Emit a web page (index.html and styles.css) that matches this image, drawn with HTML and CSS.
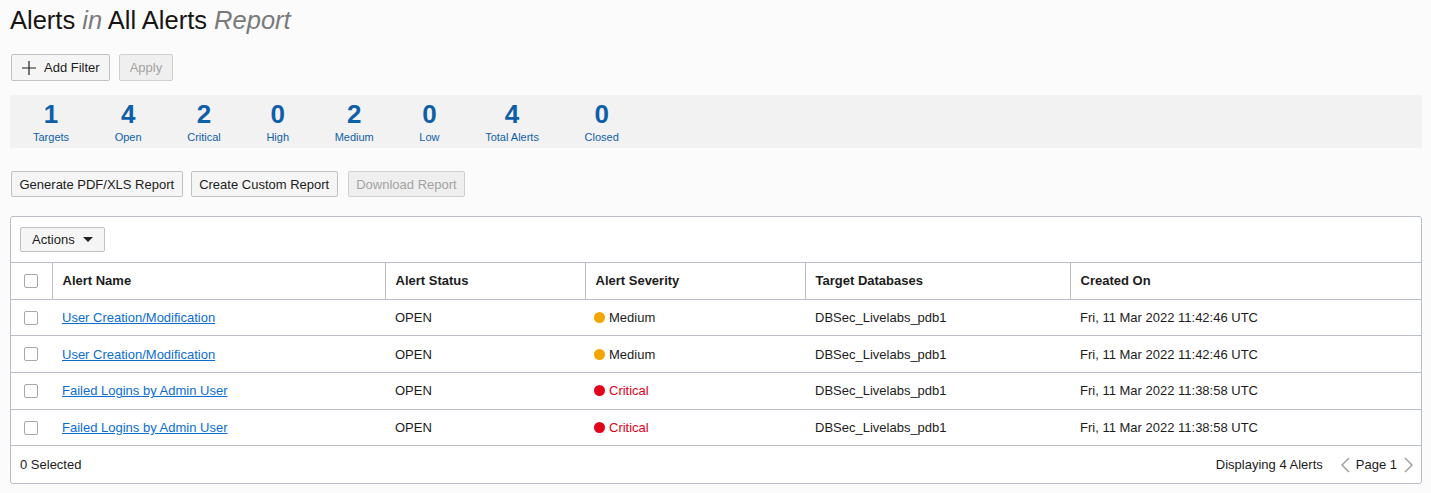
FILE: index.html
```html
<!DOCTYPE html>
<html lang="en">
<head>
<meta charset="utf-8">
<title>Alerts in All Alerts Report</title>
<link rel="stylesheet" href="styles.css">
</head>
<body>
<h1 class="title">Alerts <span class="muted">in</span> All Alerts <span class="muted">Report</span></h1>

<div class="filter-bar">
  <button class="btn btn-add"><svg class="plus" width="14" height="14" viewBox="0 0 14 14"><path d="M7 0v14M0 7h14" stroke="#222" stroke-width="1.2" fill="none"/></svg>Add Filter</button>
  <button class="btn btn-apply btn-disabled">Apply</button>
</div>

<div class="stats">
  <div class="stat"><div class="num">1</div><div class="lbl">Targets</div></div>
  <div class="stat"><div class="num">4</div><div class="lbl">Open</div></div>
  <div class="stat"><div class="num">2</div><div class="lbl">Critical</div></div>
  <div class="stat"><div class="num">0</div><div class="lbl">High</div></div>
  <div class="stat"><div class="num">2</div><div class="lbl">Medium</div></div>
  <div class="stat"><div class="num">0</div><div class="lbl">Low</div></div>
  <div class="stat"><div class="num">4</div><div class="lbl">Total Alerts</div></div>
  <div class="stat"><div class="num">0</div><div class="lbl">Closed</div></div>
</div>

<div class="report-bar">
  <button class="btn btn-report">Generate PDF/XLS Report</button>
  <button class="btn btn-report">Create Custom Report</button>
  <button class="btn btn-report btn-disabled">Download Report</button>
</div>

<div class="panel">
  <div class="toolbar">
    <button class="btn btn-actions">Actions <span class="caret"></span></button>
  </div>
  <table class="grid">
    <colgroup>
      <col class="c-check"><col class="c-name"><col class="c-status"><col class="c-sev"><col class="c-target"><col>
    </colgroup>
    <thead>
      <tr>
        <th class="chk"><span class="box"></span></th>
        <th>Alert Name</th>
        <th>Alert Status</th>
        <th>Alert Severity</th>
        <th>Target Databases</th>
        <th>Created On</th>
      </tr>
    </thead>
    <tbody>
      <tr>
        <td class="chk"><span class="box"></span></td>
        <td><a href="#">User Creation/Modification</a></td>
        <td>OPEN</td>
        <td><span class="dot medium"></span>Medium</td>
        <td>DBSec_Livelabs_pdb1</td>
        <td>Fri, 11 Mar 2022 11:42:46 UTC</td>
      </tr>
      <tr>
        <td class="chk"><span class="box"></span></td>
        <td><a href="#">User Creation/Modification</a></td>
        <td>OPEN</td>
        <td><span class="dot medium"></span>Medium</td>
        <td>DBSec_Livelabs_pdb1</td>
        <td>Fri, 11 Mar 2022 11:42:46 UTC</td>
      </tr>
      <tr>
        <td class="chk"><span class="box"></span></td>
        <td><a href="#">Failed Logins by Admin User</a></td>
        <td>OPEN</td>
        <td class="crit"><span class="dot critical"></span>Critical</td>
        <td>DBSec_Livelabs_pdb1</td>
        <td>Fri, 11 Mar 2022 11:38:58 UTC</td>
      </tr>
      <tr>
        <td class="chk"><span class="box"></span></td>
        <td><a href="#">Failed Logins by Admin User</a></td>
        <td>OPEN</td>
        <td class="crit"><span class="dot critical"></span>Critical</td>
        <td>DBSec_Livelabs_pdb1</td>
        <td>Fri, 11 Mar 2022 11:38:58 UTC</td>
      </tr>
    </tbody>
  </table>
  <div class="footer">
    <span>0 Selected</span>
    <div class="pager">
      <span>Displaying 4 Alerts</span>
      <svg class="chev" width="10" height="16" viewBox="0 0 10 16"><path d="M9 1L2 8l7 7" stroke="#9a9a9a" stroke-width="1.4" fill="none"/></svg>
      <span>Page 1</span>
      <svg class="chev" width="10" height="16" viewBox="0 0 10 16"><path d="M1 1l7 7-7 7" stroke="#9a9a9a" stroke-width="1.4" fill="none"/></svg>
    </div>
  </div>
</div>
</body>
</html>
```
FILE: styles.css
```css
* { box-sizing: border-box; }
body {
  margin: 0;
  padding: 0 9px 0 10px;
  background: #fbfbfb;
  font-family: "Liberation Sans", Arial, sans-serif;
  font-size: 13px;
  color: #1c1c1c;
}
.title {
  margin: 5px 0 0;
  font-size: 25.5px;
  font-weight: normal;
  line-height: 30px;
  color: #161513;
}
.title .muted { font-style: italic; color: #7a7a7a; }

.btn {
  font-family: inherit;
  font-size: 13px;
  color: #1c1c1c;
  background: #f5f5f5;
  border: 1px solid #c1c1c1;
  border-radius: 2px;
  padding: 0 9px;
  display: inline-flex;
  align-items: center;
  margin: 0;
}
.btn-disabled { color: #a3a3a3; background: #efefef; border-color: #cfcfcf; }

.filter-bar {
  margin-top: 19px;
  display: flex;
  gap: 9px;
  padding-left: 1px;
}
.filter-bar .btn { height: 27px; }
.btn-add { padding: 0 9px 0 10px; }
.btn-add .plus { margin-right: 8px; }
.btn-apply { padding: 0 10px; }

.stats {
  margin-top: 14px;
  height: 53px;
  background: #f2f2f2;
  display: flex;
  padding-left: 23px;
}
.stat {
  display: flex;
  flex-direction: column;
  align-items: center;
  margin-right: 45.6px;
  color: #0f5fa8;
}
.stat .num {
  font-size: 26px;
  font-weight: bold;
  line-height: 30px;
  margin-top: 4px;
}
.stat .lbl {
  font-size: 11px;
  line-height: 14px;
  margin-top: 1px;
}

.report-bar {
  margin-top: 23px;
  display: flex;
  gap: 8px;
  padding-left: 1px;
}
.report-bar .btn { height: 26px; }
.btn-report { padding: 0 7.5px; }
.report-bar .btn-disabled { margin-left: 2px; }

.panel {
  margin-top: 19px;
  background: #fff;
  border: 1px solid #b9bec6;
  border-radius: 3px;
}
.toolbar { padding: 10px 9px 10px; }
.btn-actions { height: 25px; padding: 0 11px; }
.caret {
  display: inline-block;
  margin-left: 8px;
  width: 0; height: 0;
  border-left: 5px solid transparent;
  border-right: 5px solid transparent;
  border-top: 5px solid #222;
}

.grid {
  width: 100%;
  border-collapse: collapse;
  table-layout: fixed;
}
.c-check { width: 41px; }
.c-name { width: 333px; }
.c-status { width: 200px; }
.c-sev { width: 220px; }
.c-target { width: 265px; }
.grid th, .grid td {
  height: 36.7px;
  padding: 0 10px;
  text-align: left;
  border-top: 1px solid #b9bec6;
  border-bottom: 1px solid #b9bec6;
  white-space: nowrap;
}
.grid th {
  font-weight: bold;
  border-left: 1px solid #b9bec6;
}
.grid th:first-child { border-left: none; }
.grid td.chk, .grid th.chk { padding: 0 0 0 13px; }
.box {
  display: block;
  width: 14px; height: 14px;
  border: 1px solid #a8a8a8;
  border-radius: 2px;
  background: #fff;
}
.grid a { color: #0b6dd3; text-decoration: underline; }
.grid td:nth-child(4) { padding-left: 9px; }
.dot {
  display: inline-block;
  width: 11px; height: 11px;
  border-radius: 50%;
  margin-right: 4px;
  vertical-align: -1px;
}
.dot.medium { background: #f5a500; }
.dot.critical { background: #e3001b; }
.crit { color: #e3001b; }

.footer {
  height: 37px;
  display: flex;
  align-items: center;
  justify-content: space-between;
  padding: 0 7px 0 9px;
}
.pager { display: flex; align-items: center; }
.pager .chev:first-of-type { margin: 0 6px 0 17px; }
.pager .chev:last-of-type { margin-left: 7px; }
```
